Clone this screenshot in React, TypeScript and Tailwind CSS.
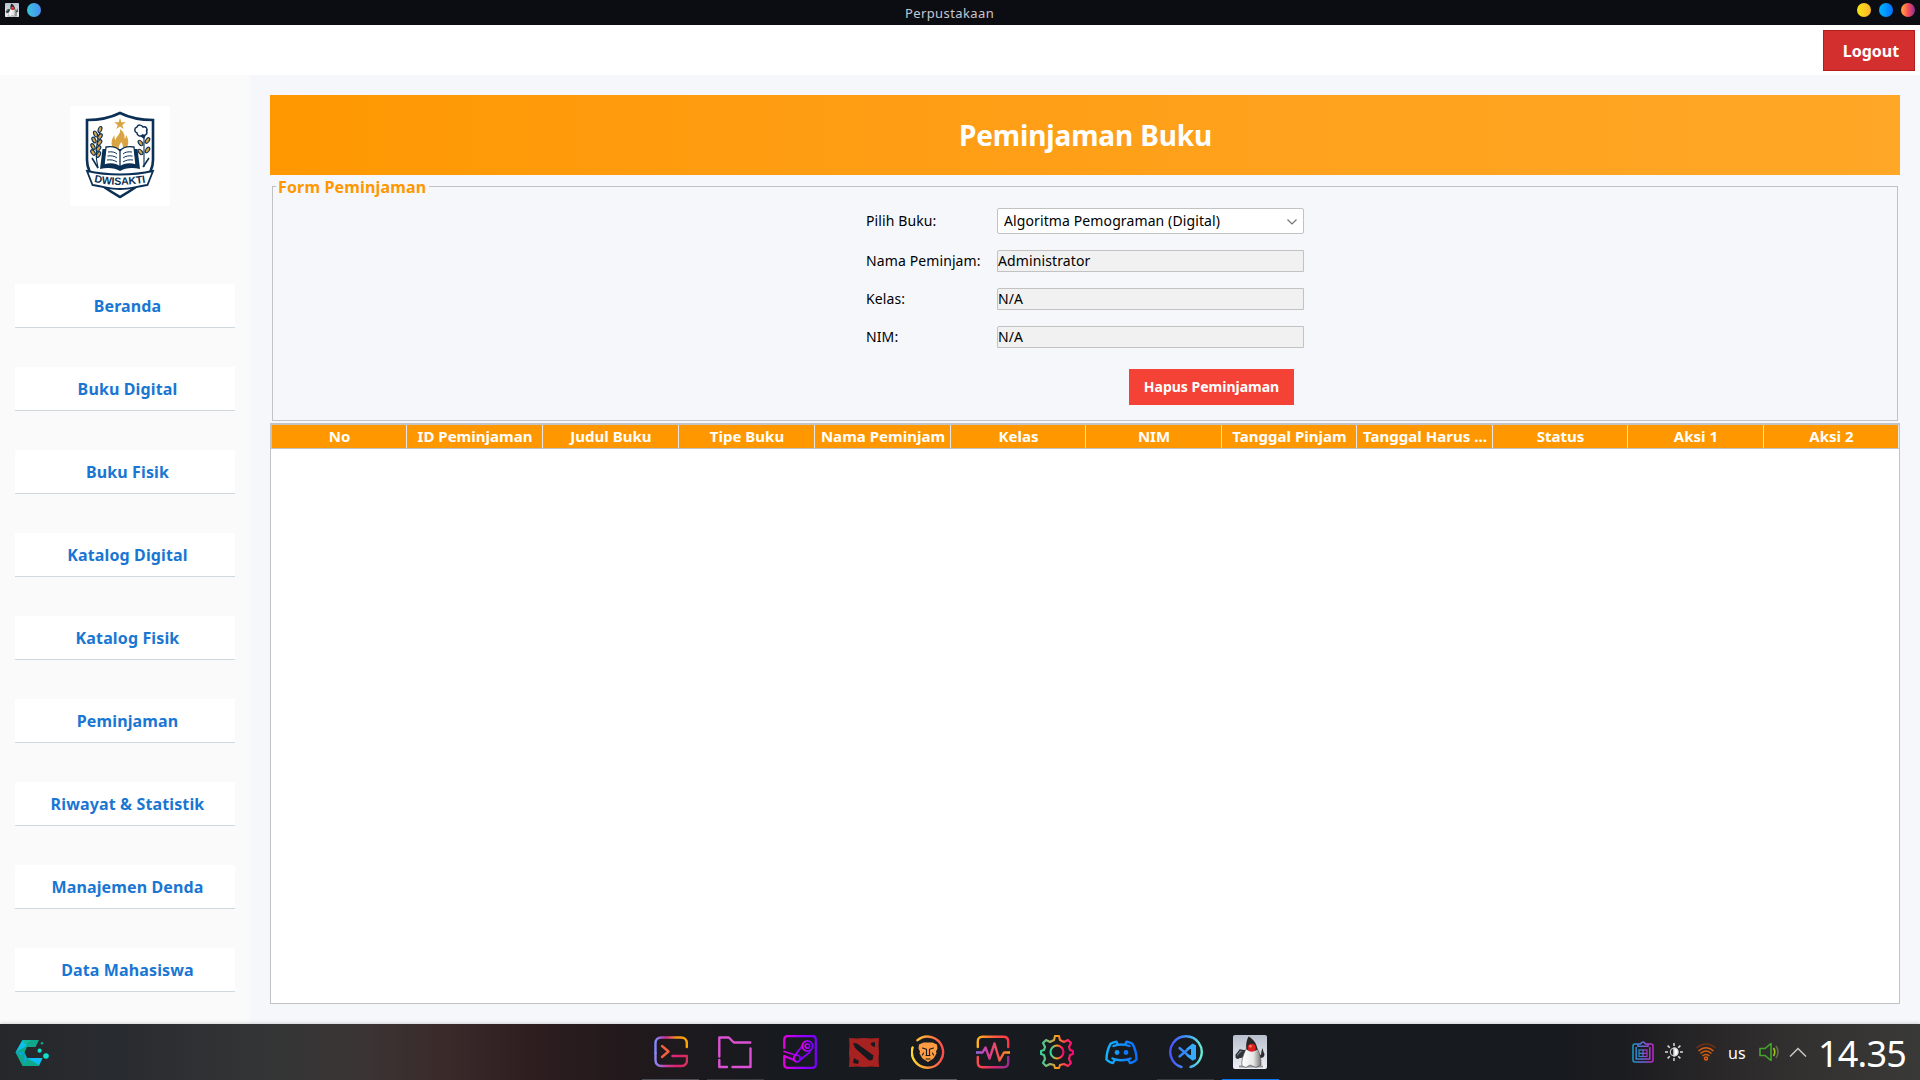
import React from "react";

const NAV = [
  "Beranda",
  "Buku Digital",
  "Buku Fisik",
  "Katalog Digital",
  "Katalog Fisik",
  "Peminjaman",
  "Riwayat & Statistik",
  "Manajemen Denda",
  "Data Mahasiswa",
];

const COLUMNS: [string, string][] = [
  ["No", "w-[136px]"],
  ["ID Peminjaman", "w-[136px]"],
  ["Judul Buku", "w-[136px]"],
  ["Tipe Buku", "w-[136px]"],
  ["Nama Peminjam", "w-[136px]"],
  ["Kelas", "w-[135px]"],
  ["NIM", "w-[136px]"],
  ["Tanggal Pinjam", "w-[135px]"],
  ["Tanggal Harus ...", "w-[136px]"],
  ["Status", "w-[135px]"],
  ["Aksi 1", "w-[136px]"],
  ["Aksi 2", "w-[135px]"],
];

function DukeIcon({ size }: { size: number }) {
  return (
    <svg width={size} height={size} viewBox="0 0 34 34">
      <defs>
        <linearGradient id="dukeBg" x1="0" y1="0" x2="0" y2="1">
          <stop offset="0" stopColor="#b9c0ce" />
          <stop offset="1" stopColor="#eef0f5" />
        </linearGradient>
        <linearGradient id="dukeBody" x1="0" y1="0" x2="1" y2="0">
          <stop offset="0" stopColor="#ffffff" />
          <stop offset=".6" stopColor="#e6e6e6" />
          <stop offset="1" stopColor="#777" />
        </linearGradient>
      </defs>
      <rect width="34" height="34" rx="2" fill="url(#dukeBg)" />
      <path d="M6 30.500h24v2H6z" fill="#6d7079" opacity=".7" />
      <path d="M3 20l4-5 5 1-3 6-5 1z" fill="#6f8ba8" stroke="#222" strokeWidth="1.200" />
      <path d="M14 15c-4 0-7 2-9 5l-3 2 3 2c2-2 5-3 8-2z" fill="#333" />
      <path d="M24 15c2 3 2 5 4 5l.500-4 1-3 1 4 1 2c0 3-2 4-4 4-2 0-4-3-5-5z" fill="#2a2a2a" />
      <path d="M14 12c-3 6-6 13-5 19l4 1.500 4-2.500 6 2.500 5-2.500c0-7-1-13-5-18z" fill="url(#dukeBody)" stroke="#444" strokeWidth=".6" />
      <path d="M15.500 1.500c4 2 8 6 9 13-3 2-8 2-11 0-1-5 0-9 2-13z" fill="#272727" />
      <circle cx="18.700" cy="12.800" r="4" fill="#dc2020" />
      <circle cx="17.500" cy="11.300" r="1.300" fill="#ff7a70" />
    </svg>
  );
}

function Leaf({ x, y, r }: { x: number; y: number; r: number }) {
  return (
    <ellipse cx={x} cy={y} rx="1.700" ry="3.100" fill="#d9a441" stroke="#0b3055" strokeWidth="1.100" transform={`rotate(${r} ${x} ${y})`} />
  );
}

function SchoolLogo() {
  const navy = "#0b3055";
  const gold = "#d9a441";
  return (
    <svg width="100" height="100" viewBox="0 0 100 100" className="bg-white">
      <path d="M50 7C40 12 29 14 17 14v40c0 18 16 27 33 37 17-10 33-19 33-37V14C71 14 60 12 50 7z" fill="#fff" stroke={navy} strokeWidth="2.600" />
      <path d="M50 12l1.400 4.200h4.400l-3.500 2.700 1.300 4.100L50 20.500l-3.600 2.500 1.300-4.100-3.500-2.700h4.400z" fill={gold} />
      <path d="M49 45c-6-1-8.500-6-7-11 .4-2 1.500-3 2.500-5 0 3 0 4 1 5 1-4 5.500-6 4.500-11 4 3 5 6 4.500 10 1-1 1.500-2 1.500-4 3.500 5 3.500 13-4 16 1.500-4 1-6-.5-9-2.500 3-3.500 5-2.500 9z" fill={gold} />
      <path d="M28 62C25 50 26 36 31 22M74 61V30" fill="none" stroke={navy} strokeWidth="1.100" />
      <Leaf x={30} y={23.500} r={20} />
      <Leaf x={25.500} y={28} r={-25} />
      <Leaf x={30} y={30.500} r={35} />
      <Leaf x={24} y={34} r={-30} />
      <Leaf x={29.500} y={36.500} r={35} />
      <Leaf x={23} y={40.500} r={-30} />
      <Leaf x={28.500} y={42.500} r={35} />
      <Leaf x={23} y={46.500} r={-35} />
      <Leaf x={28.500} y={48.500} r={30} />
      <path d="M22 52l6 10M79 52l-6 9" stroke={navy} strokeWidth="1.600" />
      <Leaf x={70.500} y={37} r={-40} />
      <Leaf x={77.500} y={34.500} r={35} />
      <Leaf x={70.500} y={46} r={-40} />
      <Leaf x={77.500} y={44} r={35} />
      <path d="M67 21c1-3 5-2 6 0 3-1 5 2 3.500 4 1.500 3-1.500 5-4 4-2 2-5.500 1-5.500-2-3-1-3-5 0-6z" fill="#fff" stroke={navy} strokeWidth="1.500" />
      <path d="M70 30l4 3 2-4z" fill={navy} />
      <path d="M32.500 43l-2.500 20c8-2 15-1 20 2 5-3 12-4 20-2l-2.500-20z" fill={navy} />
      <path d="M36 41c6-1 11 0 14 4v16c-4-3-9-4-16-2zM64 41c-6-1-11 0-14 4v16c4-3 9-4 16-2z" fill="#fff" stroke={navy} strokeWidth="1.300" />
      <path d="M38 46c4-.500 7 0 9 2M37.500 50c4-.500 7 0 9.500 2M37 54c4-.500 7 0 10 2M62 46c-4-.500-7 0-9 2M62.500 50c-4-.500-7 0-9.500 2M63 54c-4-.500-7 0-10 2" fill="none" stroke={navy} strokeWidth="1" />
      <path d="M17 65c11 2.500 22 3.500 33 3.500s22-1 33-3.500l-5.500 14c-9 1-17.500 4-27.500 4s-18.500-3-27.500-4z" fill="#fff" stroke={navy} strokeWidth="1.800" />
      <path id="ribbon" d="M24 76Q50 81.500 78 76" fill="none" />
      <text fill={navy} fontFamily="Liberation Sans" fontWeight="700" fontSize="10.500">
        <textPath href="#ribbon">DWISAKTI</textPath>
      </text>
    </svg>
  );
}

function Header() {
  return (
    <header className="flex h-[25px] items-start justify-between bg-[#0c0d12] px-[5px]">
      <div className="flex w-[99px] gap-2 pt-[3px]">
        <DukeIcon size={14} />
        <span className="h-[14px] w-[14px] rounded-full bg-linear-to-r from-[#35c5dc] to-[#4b8df0]" />
      </div>
      <div className="pt-[3px] text-[13px] leading-[20px] tracking-[0.4px] text-[#c3c7d1]">Perpustakaan</div>
      <div className="flex w-[120px] justify-end gap-2 pt-[3px]">
        <span className="h-[14px] w-[14px] rounded-full bg-linear-to-r from-[#f5e60c] to-[#fcb32c]" />
        <span className="h-[14px] w-[14px] rounded-full bg-linear-to-r from-[#00b4ff] to-[#0a70ff]" />
        <span className="h-[14px] w-[14px] rounded-full bg-linear-to-r from-[#ffac2e] via-[#f84a55] to-[#90278e]" />
      </div>
    </header>
  );
}

function Field({ label, value }: { label: string; value: string }) {
  return (
    <div className="flex h-[22px] items-center">
      <span className="w-[131px] pb-[2px]">{label}</span>
      <span className="flex h-[22px] w-[307px] items-center rounded-tl-[2px] border border-[#c2c2c2] bg-[#f1f1f1] pb-[2px]">{value}</span>
    </div>
  );
}

function Gradient({ id, stops }: { id: string; stops: string[] }) {
  return (
    <linearGradient id={id} x1="0" y1="0" x2="1" y2="0">
      {stops.map((c, i) => (
        <stop key={i} offset={i / (stops.length - 1)} stopColor={c} />
      ))}
    </linearGradient>
  );
}

function TaskIcon({ children }: { children: React.ReactNode }) {
  return (
    <svg width="34" height="34" viewBox="0 0 34 34" fill="none" strokeWidth="2.400" strokeLinecap="round" strokeLinejoin="round">
      {children}
    </svg>
  );
}

const TASKS: { line: string; icon: React.ReactNode }[] = [
  {
    line: "bg-[#4d5056]",
    icon: (
      <TaskIcon>
        <Gradient id="term" stops={["#7f8cff", "#d42a92", "#f7931e", "#ffa400"]} />
        <Gradient id="termLow" stops={["#8a86f5", "#c8409c", "#e3206f", "#d0305a"]} />
        <path d="M32.800 12V8.500q0-6-6-6H7.500q-6 0-6 6V18" stroke="url(#term)" />
        <path d="M1.500 18v7q0 6 6 6h19.500q6 0 6-6v-4H18.500" stroke="url(#termLow)" />
        <path d="M8 11l6.500 5.500L8 22" stroke="#f2603f" />
      </TaskIcon>
    ),
  },
  {
    line: "bg-[#3a3c42]",
    icon: (
      <TaskIcon>
        <path d="M1.300 21.500V2.500h9.500l5 5h16.500M32.500 13.500V32H14.500M9 32H1.300v-7" stroke="#dc50d3" />
      </TaskIcon>
    ),
  },
  {
    line: "bg-transparent",
    icon: (
      <TaskIcon>
        <Gradient id="steam" stops={["#e300e0", "#9a00ff", "#7a00ff"]} />
        <g stroke="url(#steam)" strokeWidth="2.200">
          <path d="M1.200 13V4.500q0-3.300 3.300-3.300h25q3.300 0 3.300 3.300v25q0 3.300-3.300 3.300h-25q-3.300 0-3.300-3.300V21l10 4" />
          <path d="M1.200 16.500l11 3.500 7-9M17 25l10-8" strokeWidth="1.800" />
          <circle cx="14" cy="23.500" r="3.300" strokeWidth="1.800" />
          <circle cx="24.500" cy="11" r="5.200" strokeWidth="1.800" />
          <circle cx="24.500" cy="11" r="2.200" strokeWidth="1.800" />
        </g>
      </TaskIcon>
    ),
  },
  {
    line: "bg-transparent",
    icon: (
      <TaskIcon>
        <path d="M2 3l8 .500 7-.500 7 .500 8-.500-.500 8 .500 6-.500 7 .500 8-8-.500-7 .500-7-.500-8 .500.500-8-.500-6 .500-7z" fill="#a92222" />
        <path d="M6 8l4 .500 16.500 12-1 4.500-3.500.500L8 13zM23.500 8l4.500-1v5l-3-1zM7 23l5 3-1 3-5-1z" fill="#17191e" />
      </TaskIcon>
    ),
  },
  {
    line: "bg-[#565960]",
    icon: (
      <TaskIcon>
        <Gradient id="lion" stops={["#ffd832", "#ff963d", "#ff4b4b"]} />
        <path d="M6.500 5.200A15.600 15.600 0 1 1 1.600 12.500" stroke="url(#lion)" />
        <path d="M8 9.500l4.500-2h9l4.500 2 .500 4-1.500 3 .5 2-3 5-5.500 3.500-5.500-3.500-3-5 .5-2-1.500-3z" fill="#ff9b42" />
        <path d="M11.500 13l4 1.300M22.500 13l-4 1.300M15.500 14.500v5M18.500 14.500v5M15 20.500h4M12.500 18l-1 2M21.500 18l1 2M15 24h4" stroke="#17191e" strokeWidth="1.100" />
      </TaskIcon>
    ),
  },
  {
    line: "bg-transparent",
    icon: (
      <TaskIcon>
        <Gradient id="mon" stops={["#ffb31e", "#ff6040", "#f9374b"]} />
        <Gradient id="mon2" stops={["#ff4c48", "#d52b6d", "#972c8e"]} />
        <Gradient id="wave" stops={["#9b66e4", "#d73a9c", "#f4524e", "#ff9d1e"]} />
        <path d="M1.800 12V6.500q0-4.700 4.700-4.700h21q4.700 0 4.700 4.700V12" stroke="url(#mon)" />
        <path d="M1.800 22v5.500q0 4.700 4.700 4.700h21q4.700 0 4.700-4.700V22" stroke="url(#mon2)" />
        <path d="M.5 17.500h6l3-5 4 11 5-15 5 17 4.500-8h5.500" stroke="url(#wave)" />
      </TaskIcon>
    ),
  },
  {
    line: "bg-transparent",
    icon: (
      <TaskIcon>
        <Gradient id="gear" stops={["#33d49b", "#91b66b", "#ff9b18", "#ff3e4c", "#ff0080"]} />
        <g stroke="url(#gear)" strokeWidth="2.100">
          <path d="M14 5l1-4h4l1 4 4 2 4-2 3 3-2 4 1 3 3 1v3l-3 1-1 4 2 4-3 3-4-2-4 1-1 3h-4l-1-3-4-1-4 2-3-3 2-4-1-4-3-1v-3l3-1 1-3-2-4 3-3 4 2z" />
          <circle cx="17" cy="17" r="6.500" />
        </g>
      </TaskIcon>
    ),
  },
  {
    line: "bg-transparent",
    icon: (
      <TaskIcon>
        <Gradient id="disc" stops={["#12b6ff", "#168ff8", "#0970ff"]} />
        <g stroke="url(#disc)">
          <path d="M9.500 11q8-3 16 0M13.500 8.500l-1-1.700q-3 .2-6 2Q2.500 16 2.500 24.500q3 3.300 6.500 3.500l2-3.500q6.500 1.500 13 0l2 3.500q3.500-.2 6.500-3.500 0-8.500-4-15.700-3-1.800-6-2l-1 1.700M8.500 23.500l2.500 1M26.500 23.500l-2.500 1" />
        </g>
        <circle cx="13" cy="17.500" r="2.400" fill="#149bfa" />
        <circle cx="22" cy="17.500" r="2.400" fill="#0c79fd" />
      </TaskIcon>
    ),
  },
  {
    line: "bg-[#373a40]",
    icon: (
      <TaskIcon>
        <Gradient id="code" stops={["#4b55ff", "#3e92fa", "#69edd4"]} />
        <path d="M12.500 32A15.700 15.700 0 1 1 21.500 32" stroke="url(#code)" />
        <path d="M10.500 13l10 8.500M10.500 21.500l10-8.500" stroke="#3589f7" />
        <path d="M17 14l6.500-5.500 3.500 1.700V24l-3.500 1.800L17 20.500l5-.5v-6z" fill="#34aafa" />
      </TaskIcon>
    ),
  },
  { line: "bg-[#0a78f5]", icon: <DukeIcon size={34} /> },
];

function Tray() {
  return (
    <div className="flex h-full w-[288px] items-center">
      <svg width="22" height="22" viewBox="0 0 22 22" fill="none" strokeWidth="1.500">
        <Gradient id="clip" stops={["#1999c9", "#6d65d8", "#c028c8"]} />
        <g stroke="url(#clip)">
          <path d="M6 3H3Q1 3 1 5v14q0 2 2 2h16q2 0 2-2V5q0-2-2-2h-3M4.200 6v12h13.600V6M6 5.200h10V3h-2.500Q11-1 8.500 3H6z" />
          <rect x="7" y="9" width="8" height="6.500" strokeWidth="1.200" />
          <path d="M7 12.300h8M11 9v6.500" strokeWidth="1.200" />
        </g>
      </svg>
      <svg className="ml-[11px]" width="18" height="18" viewBox="0 0 18 18" stroke="#d9d9d9" strokeWidth="1.500">
        <path d="M9 0v3M9 15v3M0 9h3M15 9h3M2.600 2.600l2.200 2.200M13.200 13.200l2.200 2.200M2.600 15.400l2.200-2.200M13.200 4.800l2.200-2.200" />
        <circle cx="9" cy="9" r="3.800" fill="none" strokeWidth="1" />
        <path d="M9 5a4 4 0 0 1 0 8z" fill="#fff" />
      </svg>
      <svg className="ml-[13px]" width="20" height="18" viewBox="0 0 20 18" fill="none" stroke="#d95f0e" strokeWidth="1.600">
        <path d="M.5 5q9.500-8 19 0" stroke="#6b3019" />
        <path d="M2.500 8q7.500-6.500 15 0M4.500 10.500q5.500-5 11 0M6.500 13q3.500-3 7 0" />
        <circle cx="10" cy="15.500" r="1.500" />
      </svg>
      <span className="ml-[12px] w-[18px] pt-[1px] text-[16px] leading-5 text-white">us</span>
      <svg className="ml-[13px]" width="20" height="18" viewBox="0 0 20 18" fill="none" strokeWidth="1.600">
        <path d="M1 5.500h5l6-5v17l-6-5H1z" stroke="#43a52b" />
        <path d="M14.500 5q2.500 4 0 8" stroke="#a0c514" />
        <path d="M17 3q4 6 0 12" stroke="#66684f" />
      </svg>
      <svg className="ml-[10px]" width="18" height="10" viewBox="0 0 18 10" fill="none" stroke="#c7c7c7" strokeWidth="1.500">
        <path d="M1 9.500l8-8 8 8" />
      </svg>
      <span className="ml-[11px] pt-[4px] text-[36px] leading-[52px] tracking-[-0.8px] text-white">14.35</span>
    </div>
  );
}

export default function App() {
  return (
    <div className="flex h-[1080px] w-[1920px] flex-col overflow-hidden bg-[#f5f7fb] font-['Noto_Sans',sans-serif] text-[14px] text-black">
      <Header />
      <div className="flex h-[50px] justify-end bg-white pt-[5px] pr-[5px]">
        <button className="h-[41px] w-[92px] border border-[#b71c1c] bg-[#d32f2f] pl-[4px] text-[16px] font-bold text-white">Logout</button>
      </div>
      <div className="flex h-[949px]">
        <aside className="flex w-[250px] flex-col bg-[#fafafa] px-[15px] pt-[31px]">
          <div className="flex h-[178px] justify-center">
            <div className="mr-[10px] h-[100px] w-[100px]">
              <SchoolLogo />
            </div>
          </div>
          <nav className="flex flex-col gap-[39px]">
            {NAV.map((n) => (
              <a key={n} className="flex h-[44px] items-center justify-center border-b border-[#cfd8dc] bg-white pl-[5px] text-[16px] font-bold tracking-[0.13px] text-[#1976d2]">
                {n}
              </a>
            ))}
          </nav>
        </aside>
        <main className="flex flex-1 flex-col px-5 pt-5">
          <h1 className="flex h-20 items-center justify-center bg-linear-to-r from-[#ff9800] to-[#ffa726] pl-[1px] text-[28px] font-bold tracking-[-0.12px] text-white">Peminjaman Buku</h1>
          <section className="mx-[2px] mt-[11px] flex h-[235px] flex-col border border-[#c2c2c2]">
            <div className="-mt-[12px] ml-[3px] h-[22px] w-[153px] bg-[#f5f7fb] pl-[2px] text-[16px] leading-[24px] font-bold tracking-[0.16px] text-[#ff9800]">Form Peminjaman</div>
            <div className="mx-auto mt-[11px] flex w-[438px] flex-col tracking-[0.11px]">
              <div className="flex h-[26px] items-center">
                <span className="w-[131px] pb-[2px]">Pilih Buku:</span>
                <span className="flex h-[26px] w-[307px] items-center justify-between rounded-[2px] border border-[#c2c2c2] bg-white pr-[6px] pl-[6px]">
                  <span className="pb-[2px]">Algoritma Pemograman (Digital)</span>
                  <svg className="mt-[2px]" width="10" height="6" viewBox="0 0 10 6" fill="none" stroke="#707070" strokeWidth="1.100">
                    <path d="M.5.500L5 5l4.500-4.500" />
                  </svg>
                </span>
              </div>
              <div className="mt-4 flex flex-col gap-4">
                <Field label="Nama Peminjam:" value="Administrator" />
                <Field label="Kelas:" value="N/A" />
                <Field label="NIM:" value="N/A" />
              </div>
              <button className="mt-[21px] mr-[10px] h-9 w-[165px] self-end bg-[#f44336] pb-[2px] text-[14px] font-bold tracking-normal text-white">Hapus Peminjaman</button>
            </div>
          </section>
          <section className="mt-[2px] h-[581px] border border-[#c3c3c4] bg-white">
            <div className="flex h-[25px] border-t border-b border-[#c3c3c4] bg-[#ff9800]">
              {COLUMNS.map(([name, w], i) => (
                <div
                  key={name}
                  className={`${w} ${i === 0 ? "border-l border-l-[#c3c3c4]" : ""} flex shrink-0 items-center justify-center border-r border-r-[#e6e6e6] pb-[2px] pl-[1px] text-[15px] leading-[20px] font-bold tracking-[0.02px] whitespace-nowrap text-white`}
                >
                  {name}
                </div>
              ))}
            </div>
          </section>
        </main>
      </div>
      <footer className="flex h-[56px] items-center justify-between bg-[linear-gradient(90deg,#25272b_0px,#282b2f_110px,#343536_270px,#3a3534_360px,#3a2a2a_445px,#2e1e1f_530px,#21191c_630px,#171a1f_760px,#171a1f_1560px,#1b1c20_1620px,#282627_1710px,#333130_1800px,#393937_1920px)] shadow-[0_-1px_3px_rgba(0,0,0,0.15)]">
        <div className="w-[288px] pl-[15px]">
          <svg width="34" height="34" viewBox="0 0 34 34">
            <path d="M7.500 5H24l-3.500 7H12l-2.500 5.500 2.500 5.500h15.500L24 31H7.500L.5 17.500z" fill="#10a88a" />
            <path d="M7.500 5l4.500 4.500-2 2.500-6 3-3.500 2.500z" fill="#0ebfea" />
            <path d="M7.500 5h9L10 9.500z" fill="#12b79a" />
            <path d="M.5 17.500l9 0-3 3zM9.500 17.500l2.500 5.500-3 6z" fill="#0aa5df" />
            <path d="M12 23h15.500L24 30z" fill="#0dbff5" />
            <circle cx="24.600" cy="15.700" r="2.100" fill="#0de0cc" />
            <circle cx="31" cy="21" r="2.800" fill="#0de0cc" />
            <circle cx="27" cy="8.300" r="1.200" fill="#12a6a0" />
          </svg>
        </div>
        <div className="flex h-full gap-[7.35px] pl-[1px]">
          {TASKS.map((t, i) => (
            <div key={i} className="flex h-full w-[57px] flex-col items-center">
              <div className="flex h-[55px] items-center pt-[1px]">{t.icon}</div>
              <div className={`h-px w-full ${t.line}`} />
            </div>
          ))}
        </div>
        <Tray />
      </footer>
    </div>
  );
}
